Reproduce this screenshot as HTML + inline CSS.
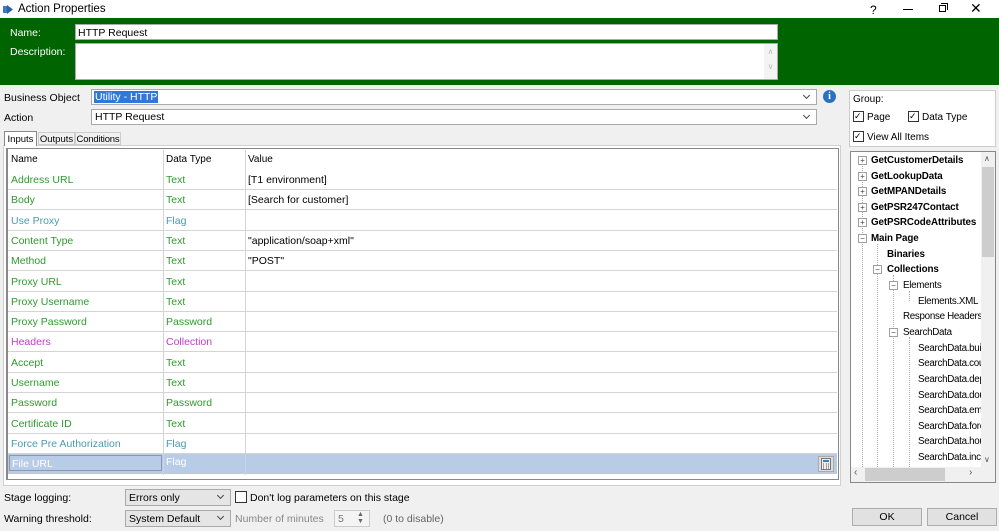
<!DOCTYPE html>
<html><head><style>
*{margin:0;padding:0;box-sizing:border-box}
body{width:999px;height:531px;overflow:hidden;background:#f0f0f0;font-family:"Liberation Sans",sans-serif;font-size:11px;color:#000;position:relative}
.a{position:absolute;white-space:nowrap}
.g{color:#2e9a2e}.f{color:#4a9bb0}.m{color:#c03cc8}
.row{position:absolute;left:8px;width:829px;height:20px;border-bottom:1px solid #d4d4d4}
.row span{position:absolute;top:4px;font-size:10.5px}
.t{position:absolute;font-weight:bold;font-size:9.8px;white-space:nowrap;letter-spacing:-0.1px}
.n{position:absolute;font-size:9.8px;white-space:nowrap;letter-spacing:-0.3px}
.pm{position:absolute;width:9px;height:9px;border:1px solid #a0a0a0;background:#fff;font-size:8px;line-height:7px;text-align:center;color:#444}
.dd{position:absolute;background:#fff;border:1px solid #a9a9a9}
.dd:after{content:"";position:absolute;right:7px;top:3px;width:4px;height:4px;border-right:1px solid #444;border-bottom:1px solid #444;transform:rotate(45deg)}
.tab{position:absolute;font-size:9.5px;white-space:nowrap;text-align:center}
</style></head><body>
<div class="a" style="left:0;top:0;width:999px;height:18px;background:#fff"></div>
<svg class="a" style="left:3px;top:4px" width="11" height="11"><rect x="0" y="2" width="4" height="7" fill="#3a7bc8"/><path d="M4 1 L10 5.5 L4 10Z" fill="#2a5fa0"/></svg>
<div class="a" style="left:18px;top:3px;font-size:11.5px">Action Properties</div>
<div class="a" style="left:870px;top:3px;font-size:12px">?</div>
<div class="a" style="left:903px;top:9px;width:10px;height:1px;background:#000"></div>
<div class="a" style="left:939px;top:5px;width:7px;height:7px;border:1px solid #000"></div>
<div class="a" style="left:941px;top:3px;width:7px;height:7px;border-top:1px solid #000;border-right:1px solid #000"></div>
<div class="a" style="left:970px;top:0px;font-size:14px">✕</div>
<div class="a" style="left:0;top:18px;width:999px;height:67px;background:#006400"></div>
<div class="a" style="left:10px;top:27px;color:#fff;font-size:10.5px">Name:</div>
<div class="a" style="left:10px;top:46px;color:#fff;font-size:10.5px">Description:</div>
<div class="a" style="left:75px;top:24px;width:703px;height:16px;background:#fff;border:1px solid #aaa;padding:2px 2px;font-size:10.5px">HTTP Request</div>
<div class="a" style="left:75px;top:43px;width:703px;height:37px;background:#fff;border:1px solid #aaa"></div>
<div class="a" style="left:764px;top:44px;width:13px;height:35px;background:#f4f4f4;color:#bbb;font-size:8px;text-align:center;line-height:15px">∧<br>∨</div>
<div class="a" style="left:4px;top:92px;font-size:10.5px">Business Object</div>
<div class="a" style="left:4px;top:112px;font-size:10.5px">Action</div>
<div class="dd" style="left:91px;top:89px;width:726px;height:16px"></div>
<div class="a" style="left:94px;top:91px;background:#3078d7;color:#fff;padding:0 1px;font-size:10.5px">Utility - HTTP</div>
<div class="dd" style="left:91px;top:109px;width:726px;height:16px"></div>
<div class="a" style="left:95px;top:111px;font-size:10.5px">HTTP Request</div>
<div class="a" style="left:823px;top:90px;width:13px;height:13px;border-radius:50%;background:#2a6fc0;color:#fff;font-size:10px;font-weight:bold;text-align:center;line-height:13px;font-family:'Liberation Serif',serif">i</div>
<div class="a" style="left:3px;top:145px;width:838px;height:341px;background:#fff;border:1px solid #d0d0d0"></div>
<div class="tab" style="left:4px;top:131px;width:33px;height:15px;background:#fff;border:1px solid #888;border-bottom:none;padding-top:2px">Inputs</div>
<div class="tab" style="left:38px;top:132px;width:37px;height:13px;border:1px solid #ccc;padding-top:1px">Outputs</div>
<div class="tab" style="left:75px;top:132px;width:46px;height:13px;border:1px solid #ccc;padding-top:1px;letter-spacing:-0.2px">Conditions</div>
<div class="a" style="left:6px;top:148px;width:833px;height:332px;background:#fff;border:1px solid #888;border-left:2px solid #888"></div>
<div class="a" style="left:11px;top:154px;font-size:10px">Name</div>
<div class="a" style="left:166px;top:154px;font-size:10px">Data Type</div>
<div class="a" style="left:248px;top:154px;font-size:10px">Value</div>
<div class="a" style="left:163px;top:150px;width:1px;height:325px;background:#d4d4d4"></div>
<div class="a" style="left:245px;top:150px;width:1px;height:325px;background:#d4d4d4"></div>
<div class="row" style="top:170px"><span class="g" style="left:3px">Address URL</span><span class="g" style="left:158px">Text</span><span style="left:240px">[T1 environment]</span></div>
<div class="row" style="top:190.3px"><span class="g" style="left:3px">Body</span><span class="g" style="left:158px">Text</span><span style="left:240px">[Search for customer]</span></div>
<div class="row" style="top:210.6px"><span class="f" style="left:3px">Use Proxy</span><span class="f" style="left:158px">Flag</span></div>
<div class="row" style="top:230.9px"><span class="g" style="left:3px">Content Type</span><span class="g" style="left:158px">Text</span><span style="left:240px">"application/soap+xml"</span></div>
<div class="row" style="top:251.2px"><span class="g" style="left:3px">Method</span><span class="g" style="left:158px">Text</span><span style="left:240px">"POST"</span></div>
<div class="row" style="top:271.5px"><span class="g" style="left:3px">Proxy URL</span><span class="g" style="left:158px">Text</span></div>
<div class="row" style="top:291.8px"><span class="g" style="left:3px">Proxy Username</span><span class="g" style="left:158px">Text</span></div>
<div class="row" style="top:312.1px"><span class="g" style="left:3px">Proxy Password</span><span class="g" style="left:158px">Password</span></div>
<div class="row" style="top:332.4px"><span class="m" style="left:3px">Headers</span><span class="m" style="left:158px">Collection</span></div>
<div class="row" style="top:352.7px"><span class="g" style="left:3px">Accept</span><span class="g" style="left:158px">Text</span></div>
<div class="row" style="top:373px"><span class="g" style="left:3px">Username</span><span class="g" style="left:158px">Text</span></div>
<div class="row" style="top:393.3px"><span class="g" style="left:3px">Password</span><span class="g" style="left:158px">Password</span></div>
<div class="row" style="top:413.6px"><span class="g" style="left:3px">Certificate ID</span><span class="g" style="left:158px">Text</span></div>
<div class="row" style="top:433.9px"><span class="f" style="left:3px">Force Pre Authorization</span><span class="f" style="left:158px">Flag</span></div>
<div class="row" style="top:454.2px;background:#b8cce8;border-bottom:1px solid #c8c8c8"><span style="left:1px;top:1px;width:153px;height:16px;border:1px solid #8898b0;color:#fff;padding:2px 2px;background:#b8cce8">File URL</span><span style="left:158px;top:2px;color:#fff">Flag</span></div>
<div class="a" style="left:163px;top:454px;width:1px;height:20px;background:#c8d4e4"></div>
<div class="a" style="left:245px;top:454px;width:1px;height:20px;background:#c8d4e4"></div>
<div class="a" style="left:818px;top:456px;width:16px;height:16px;border:1px solid #aaa;background:#ddd"></div>
<svg class="a" style="left:821px;top:458px" width="10" height="12"><rect x="0.5" y="0.5" width="9" height="11" fill="#eee" stroke="#777"/><rect x="2" y="2" width="6" height="2" fill="#3a7bc8"/><path d="M2 6h1M5 6h1M7 6h1M2 8h1M5 8h1M7 8h1M2 10h1M5 10h1M7 10h1" stroke="#555"/></svg>
<div class="a" style="left:4px;top:492px;font-size:10.5px">Stage logging:</div>
<div class="a" style="left:4px;top:513px;font-size:10.5px">Warning threshold:</div>
<div class="dd" style="left:125px;top:489px;width:106px;height:17px;background:#e5e5e5"></div>
<div class="a" style="left:129px;top:492px;font-size:10.5px">Errors only</div>
<div class="dd" style="left:125px;top:510px;width:106px;height:17px;background:#e5e5e5"></div>
<div class="a" style="left:129px;top:513px;font-size:10.5px">System Default</div>
<div class="a" style="left:235px;top:491px;width:12px;height:12px;border:1px solid #333;background:#fff"></div>
<div class="a" style="left:250px;top:492px;font-size:10.5px">Don't log parameters on this stage</div>
<div class="a" style="left:235px;top:513px;font-size:10.5px;color:#888">Number of minutes</div>
<div class="a" style="left:334px;top:510px;width:36px;height:17px;border:1px solid #ccc;background:#f4f4f4;font-size:10.5px;color:#777;padding:2px 3px">5</div>
<div class="a" style="left:357px;top:511px;font-size:7px;color:#666;line-height:7px">▲<br>▼</div>
<div class="a" style="left:383px;top:513px;font-size:10.5px;color:#666">(0 to disable)</div>
<div class="a" style="left:852px;top:508px;width:70px;height:18px;border:1px solid #adadad;background:#e1e1e1;text-align:center;line-height:16px;font-size:10.5px">OK</div>
<div class="a" style="left:927px;top:508px;width:70px;height:18px;border:1px solid #adadad;background:#e1e1e1;text-align:center;line-height:16px;font-size:10.5px">Cancel</div>
<div class="a" style="left:849px;top:90px;width:147px;height:57px;background:#fff;border:1px solid #ccc"></div>
<div class="a" style="left:853px;top:94px;font-size:10px">Group:</div>
<div class="a" style="left:853px;top:111px;width:11px;height:11px;border:1px solid #333;font-size:9px;line-height:9px">✓</div>
<div class="a" style="left:867px;top:112px;font-size:10px">Page</div>
<div class="a" style="left:908px;top:111px;width:11px;height:11px;border:1px solid #333;font-size:9px;line-height:9px">✓</div>
<div class="a" style="left:922px;top:112px;font-size:10px">Data Type</div>
<div class="a" style="left:853px;top:131px;width:11px;height:11px;border:1px solid #333;font-size:9px;line-height:9px">✓</div>
<div class="a" style="left:867px;top:132px;font-size:10px">View All Items</div>
<div class="a" style="left:850px;top:151px;width:146px;height:332px;background:#fff;border:1px solid #888"></div>
<div class="a" style="left:851px;top:152px;width:130px;height:315px;overflow:hidden">
<div class="a" style="left:11px;top:8px;width:0;height:307px;border-left:1px dotted #aaa"></div>
<div class="a" style="left:26px;top:92px;width:0;height:223px;border-left:1px dotted #aaa"></div>
<div class="a" style="left:42px;top:123px;width:0;height:192px;border-left:1px dotted #aaa"></div>
<div class="a" style="left:58px;top:139px;width:0;height:10px;border-left:1px dotted #aaa"></div>
<div class="a" style="left:58px;top:185px;width:0;height:130px;border-left:1px dotted #aaa"></div>
<div class="pm" style="left:7px;top:4px">+</div><div class="t" style="left:20px;top:3px">GetCustomerDetails</div>
<div class="pm" style="left:7px;top:20px">+</div><div class="t" style="left:20px;top:19px">GetLookupData</div>
<div class="pm" style="left:7px;top:35px">+</div><div class="t" style="left:20px;top:34px">GetMPANDetails</div>
<div class="pm" style="left:7px;top:51px">+</div><div class="t" style="left:20px;top:50px">GetPSR247Contact</div>
<div class="pm" style="left:7px;top:66px">+</div><div class="t" style="left:20px;top:65px">GetPSRCodeAttributes</div>
<div class="pm" style="left:7px;top:82px">−</div><div class="t" style="left:20px;top:81px">Main Page</div>
<div class="t" style="left:36px;top:97px">Binaries</div>
<div class="pm" style="left:22px;top:113px">−</div><div class="t" style="left:36px;top:112px">Collections</div>
<div class="pm" style="left:38px;top:129px">−</div><div class="n" style="left:52px;top:128px">Elements</div>
<div class="n" style="left:67px;top:144px">Elements.XML</div>
<div class="n" style="left:52px;top:159px">Response Headers</div>
<div class="pm" style="left:38px;top:176px">−</div><div class="n" style="left:52px;top:175px">SearchData</div>
<div class="n" style="left:67px;top:191px">SearchData.buil</div>
<div class="n" style="left:67px;top:206px">SearchData.cou</div>
<div class="n" style="left:67px;top:222px">SearchData.dep</div>
<div class="n" style="left:67px;top:238px">SearchData.dou</div>
<div class="n" style="left:67px;top:253px">SearchData.ema</div>
<div class="n" style="left:67px;top:269px">SearchData.fore</div>
<div class="n" style="left:67px;top:284px">SearchData.hou</div>
<div class="n" style="left:67px;top:300px">SearchData.incl</div>
</div>
<div class="a" style="left:981px;top:152px;width:14px;height:315px;background:#f0f0f0"></div>
<div class="a" style="left:982px;top:167px;width:12px;height:90px;background:#cdcdcd"></div>
<div class="a" style="left:984px;top:154px;font-size:8px;color:#555">∧</div>
<div class="a" style="left:984px;top:455px;font-size:8px;color:#555">∨</div>
<div class="a" style="left:851px;top:467px;width:144px;height:15px;background:#f0f0f0"></div>
<div class="a" style="left:865px;top:468px;width:80px;height:13px;background:#cdcdcd"></div>
<div class="a" style="left:854px;top:467px;font-size:10px;color:#555">‹</div>
<div class="a" style="left:969px;top:467px;font-size:10px;color:#555">›</div>
</body></html>
